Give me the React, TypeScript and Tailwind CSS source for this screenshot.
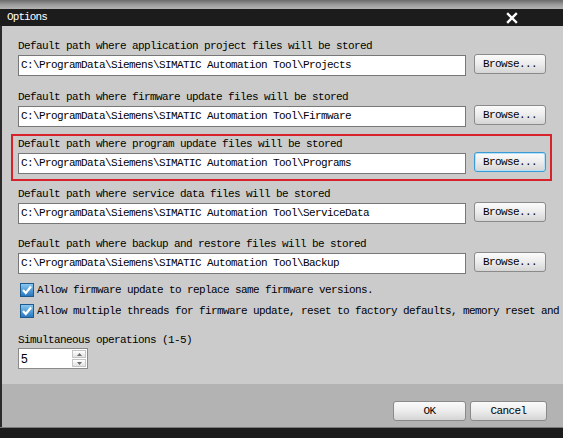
import type { ReactNode } from 'react';

const mono = { fontFamily: '"Liberation Mono", "Courier New", monospace' };

function Btn({ children, focused, w = 'w-[72px]' }: { children: ReactNode; focused?: boolean; w?: string }) {
  return (
    <div
      className={`${w} flex h-[20px] shrink-0 items-center justify-center rounded-[3px] border bg-gradient-to-b from-[#fbfbfb] via-[#ececec] to-[#d5d5d5] text-[11px] tracking-[-0.6px] text-black ${
        focused ? 'border-[#3a9bd4] shadow-[inset_0_0_0_1px_#b6e0f7]' : 'border-[#8a8a8a]'
      }`}
    >
      {children}
    </div>
  );
}

function PathRow({ label, value, focused }: { label: string; value: string; focused?: boolean }) {
  return (
    <div className="flex flex-col">
      <div className="h-[12px] text-[11px] leading-[12px] tracking-[-0.6px] whitespace-nowrap">{label}</div>
      <div className="mt-[2px] flex items-start gap-[8px]">
        <div className="mt-[1px] flex h-[21px] w-[448px] items-center border border-[#777] bg-white pl-[2px] text-[11px] tracking-[-0.6px] whitespace-nowrap">
          {value}
        </div>
        <Btn focused={focused}>Browse...</Btn>
      </div>
    </div>
  );
}

function Check({ label }: { label: string }) {
  return (
    <div className="flex h-[14px] items-center gap-[3px] whitespace-nowrap">
      <svg width="14" height="14" viewBox="0 0 14 14" className="ml-[2px] shrink-0">
        <defs>
          <linearGradient id="cb" x1="0" y1="0" x2="0" y2="1">
            <stop offset="0" stopColor="#8ccaf2" />
            <stop offset="1" stopColor="#2474bd" />
          </linearGradient>
        </defs>
        <rect x="0.5" y="0.5" width="13" height="13" fill="url(#cb)" stroke="#1e5a8c" />
        <path d="M3 7 L5.8 10 L11 3.5" fill="none" stroke="#fff" strokeWidth="2.2" />
      </svg>
      <span className="text-[11px] tracking-[-0.6px]">{label}</span>
    </div>
  );
}

export default function App() {
  return (
    <div className="relative flex h-[438px] w-[563px] flex-col overflow-hidden bg-[#cbcbcb] text-black" style={mono}>
      {/* title area */}
      <div className="h-[9px] shrink-0 bg-gradient-to-b from-[#6a6a6a] via-[#9a9a9a] to-[#b4b4b4]" />
      <div className="flex h-[17px] shrink-0 items-center justify-between bg-[#1c1c1c] pl-[7px] pr-[45px] text-white">
        <span className="text-[11px] tracking-[-0.9px]">Options</span>
        <svg width="12" height="12" viewBox="0 0 12 12">
          <path d="M2 2 L10 10 M10 2 L2 10" stroke="#fff" strokeWidth="2.4" strokeLinecap="square" />
        </svg>
      </div>

      <div className="flex flex-1 flex-col border-l-2 border-[#2a2a2a] pl-[16px]">
        <div className="mt-[14px]">
          <PathRow label="Default path where application project files will be stored" value="C:\ProgramData\Siemens\SIMATIC Automation Tool\Projects" />
        </div>
        <div className="mt-[15px]">
          <PathRow label="Default path where firmware update files will be stored" value="C:\ProgramData\Siemens\SIMATIC Automation Tool\Firmware" />
        </div>
        <div className="-ml-[7px] mt-[7px] w-[541px] border-2 border-[#d7222b] pb-[5px] pl-[5px] pr-[4px] pt-[2px]">
          <PathRow label="Default path where program update files will be stored" value="C:\ProgramData\Siemens\SIMATIC Automation Tool\Programs" focused />
        </div>
        <div className="mt-[7px]">
          <PathRow label="Default path where service data files will be stored" value="C:\ProgramData\Siemens\SIMATIC Automation Tool\ServiceData" />
        </div>
        <div className="mt-[14px]">
          <PathRow label="Default path where backup and restore files will be stored" value="C:\ProgramData\Siemens\SIMATIC Automation Tool\Backup" />
        </div>
        <div className="mt-[9px] flex flex-col gap-[7px]">
          <Check label="Allow firmware update to replace same firmware versions." />
          <Check label="Allow multiple threads for firmware update, reset to factory defaults, memory reset and" />
        </div>
        <div className="mt-[16px] h-[12px] text-[11px] leading-[12px] tracking-[-0.6px]">Simultaneous operations (1-5)</div>
        <div className="mt-[2px] flex h-[21px] w-[70px] items-center justify-between border border-[#8a8a8a] bg-white pl-[2px] pr-[1px]">
          <span className="text-[12px]" style={{ fontFamily: '"Liberation Sans", Arial, sans-serif' }}>5</span>
          <div className="flex h-[17px] w-[14px] flex-col gap-px">
            <div className="flex flex-1 items-center justify-center border border-[#c4c4c4] bg-gradient-to-b from-white to-[#e2e2e2]">
              <svg width="5" height="3" viewBox="0 0 5 3"><path d="M0 3 L2.5 0 L5 3 Z" fill="#6a6a6a" /></svg>
            </div>
            <div className="flex flex-1 items-center justify-center border border-[#c4c4c4] bg-gradient-to-b from-white to-[#e2e2e2]">
              <svg width="5" height="3" viewBox="0 0 5 3"><path d="M0 0 L2.5 3 L5 0 Z" fill="#6a6a6a" /></svg>
            </div>
          </div>
        </div>
      </div>

      {/* footer */}
      <div className="flex h-[43px] shrink-0 items-start justify-end gap-[4px] border-l-2 border-[#2a2a2a] bg-[#b3b3b3] pr-[16px] pt-[17px]">
        <Btn w="w-[73px]">OK</Btn>
        <Btn w="w-[77px]">Cancel</Btn>
      </div>
      <div className="h-[11px] shrink-0 border-t border-[#7a7a7a] bg-[#1c1c1c]" />
    </div>
  );
}
